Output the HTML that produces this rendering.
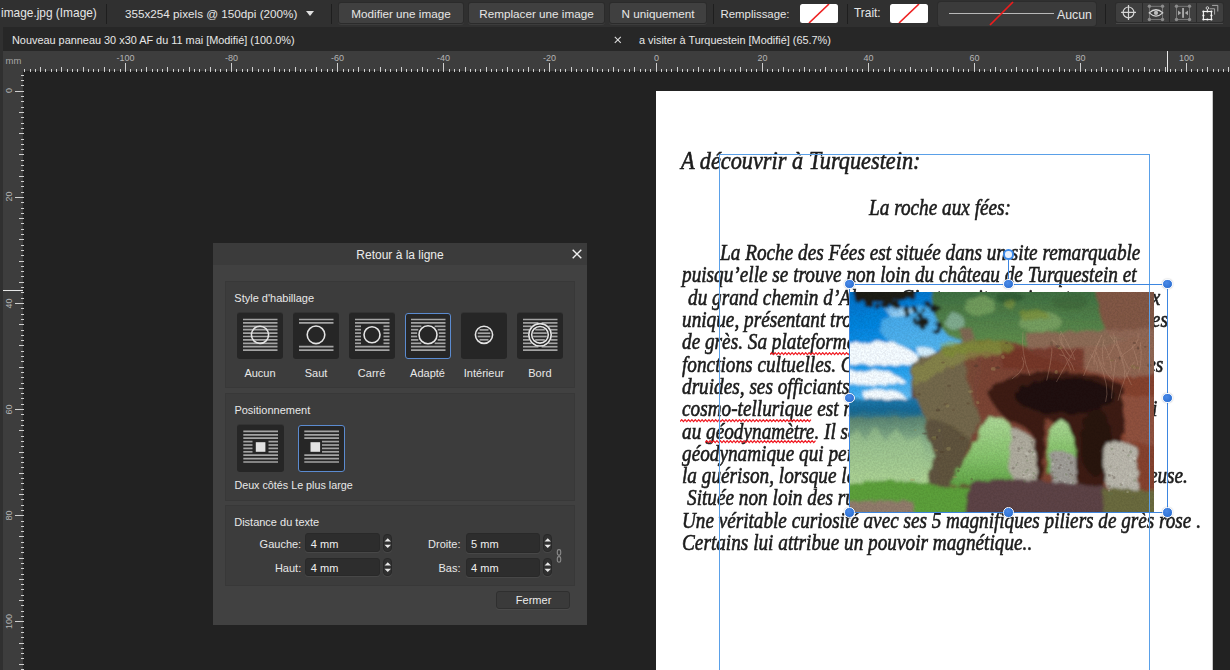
<!DOCTYPE html><html><head><meta charset="utf-8"><title>r</title><style>
*{margin:0;padding:0;box-sizing:border-box}
html,body{width:1230px;height:670px;overflow:hidden;background:#222;font-family:"Liberation Sans",sans-serif}
.a{position:absolute}
.ui{color:#e6e6e6;font-size:11.7px;white-space:nowrap;line-height:1}
.sep{position:absolute;width:1px;background:#1e1e1e;top:4px;height:20px}
.btn{position:absolute;top:3px;height:20px;background:#404040;border-radius:2px;box-shadow:0 0 0 1px #2b2b2b,0 1px 0 1px #3c3c3c}
.tick{position:absolute;background:#cfcfcf;width:1px}
.rl{position:absolute;color:#b4b4b4;font-size:9px;line-height:1;white-space:nowrap}
.doc{position:absolute;font-family:"Liberation Serif",serif;font-style:italic;color:#1c1c1c;-webkit-text-stroke:0.6px #1c1c1c;white-space:pre;line-height:1;transform-origin:0 0}
</style></head><body>
<div class="a" style="left:0;top:0;width:1230px;height:27px;background:#303030"></div>
<div class="a ui" style="left:1px;top:8.23px;font-size:11.9px;color:#e6e6e6;">image.jpg (Image)</div>
<div class="sep" style="left:106px"></div>
<div class="a ui" style="left:125px;top:7.80px;font-size:11.7px;color:#e6e6e6;">355x254 pixels @ 150dpi (200%)</div>
<svg class="a" style="left:306px;top:11px" width="8" height="5"><path d="M0 0H8L4 5Z" fill="#e0e0e0"/></svg>
<div class="sep" style="left:331px"></div>
<div class="btn" style="left:339px;width:124px"></div>
<div class="a ui" style="left:339px;width:124px;top:7.6px;text-align:center">Modifier une image</div>
<div class="btn" style="left:469px;width:135px"></div>
<div class="a ui" style="left:469px;width:135px;top:7.6px;text-align:center">Remplacer une image</div>
<div class="btn" style="left:610px;width:96px"></div>
<div class="a ui" style="left:610px;width:96px;top:7.6px;text-align:center">N uniquement</div>
<div class="sep" style="left:713px"></div>
<div class="a ui" style="left:720.5px;top:8.65px;font-size:11.4px;color:#e6e6e6;">Remplissage:</div>
<svg class="a" style="left:800px;top:4px" width="38" height="19"><rect x="0" y="0" width="38" height="19" rx="2.5" fill="#fff"/><line x1="9" y1="19" x2="29" y2="0" stroke="#ee2020" stroke-width="1.6"/></svg>
<div class="sep" style="left:847px"></div>
<div class="a ui" style="left:854px;top:8.23px;font-size:11.9px;color:#e6e6e6;">Trait:</div>
<svg class="a" style="left:890px;top:4px" width="38" height="19"><rect x="0" y="0" width="38" height="19" rx="2.5" fill="#fff"/><line x1="9" y1="19" x2="29" y2="0" stroke="#ee2020" stroke-width="1.6"/></svg>
<div class="a" style="left:938px;top:2px;width:158px;height:24px;background:#3b3b3b;border-radius:3px;box-shadow:0 0 0 1px #2c2c2c"></div>
<div class="a" style="left:949px;top:13px;width:105px;height:1px;background:#b8b8b8"></div>
<svg class="a" style="left:988px;top:1px" width="28" height="26"><line x1="2" y1="24" x2="25" y2="1" stroke="#ee1c1c" stroke-width="1.7"/></svg>
<div class="a ui" style="left:1057px;top:8.59px;font-size:12.3px;color:#e6e6e6;">Aucun</div>
<div class="sep" style="left:1105px"></div>
<div class="a" style="left:1116px;top:3px;width:107px;height:19px;background:#3f3f3f;border-radius:2px;box-shadow:0 0 0 1px #2c2c2c"></div>
<div class="a" style="left:1116px;top:22.5px;width:107px;height:1.5px;background:#484848"></div>
<div class="a" style="left:1142px;top:3px;width:1px;height:19px;background:#2a2a2a"></div>
<div class="a" style="left:1169px;top:3px;width:1px;height:19px;background:#2a2a2a"></div>
<div class="a" style="left:1196px;top:3px;width:1px;height:19px;background:#2a2a2a"></div>
<svg class="a" style="left:1116px;top:3px" width="107" height="20">
<g stroke="#d6d6d6" fill="none" stroke-width="1.2">
<circle cx="12.5" cy="9.4" r="5.4"/><path d="M12.5 1.9V17M5.1 9.4H20"/>
</g>
<rect x="33.4" y="3.3" width="13.1" height="13.2" fill="none" stroke="#7c7c7c" stroke-width="0.9"/>
<g fill="#8c8c8c"><circle cx="33.4" cy="3.3" r="1.7"/><circle cx="46.5" cy="3.3" r="1.7"/><circle cx="33.4" cy="16.5" r="1.7"/><circle cx="46.5" cy="16.5" r="1.7"/></g>
<path d="M33.2 9.9Q40 3.6 46.8 9.9Q40 16.2 33.2 9.9Z" fill="#3d3d3d" stroke="#d6d6d6" stroke-width="1.2"/>
<circle cx="40" cy="9.9" r="2.1" fill="#bdbdbd"/>
<rect x="60.5" y="3.3" width="13" height="13.2" fill="none" stroke="#7c7c7c" stroke-width="0.9"/>
<g fill="#8c8c8c"><circle cx="60.5" cy="3.3" r="1.7"/><circle cx="73.5" cy="3.3" r="1.7"/><circle cx="60.5" cy="16.5" r="1.7"/><circle cx="73.5" cy="16.5" r="1.7"/></g>
<rect x="66.1" y="5" width="1.9" height="9.8" fill="#a8a8a8"/>
<path d="M62 7.6L65.3 9.9L62 12.2ZM72 7.6L68.8 9.9L72 12.2Z" fill="#a8a8a8"/>
<path d="M93.5 5.8H98.6V11.6M96.1 2.4H101.8V8.5" fill="none" stroke="#b4b4b4" stroke-width="0.9"/>
<rect x="87.4" y="8.5" width="8" height="8" fill="#3d3d3d" stroke="#f2f2f2" stroke-width="1.1"/>
<g fill="#f6f6f6"><circle cx="87.4" cy="8.5" r="1.1"/><circle cx="95.4" cy="8.5" r="1.1"/><circle cx="87.4" cy="16.5" r="1.1"/><circle cx="95.4" cy="16.5" r="1.1"/><circle cx="91.4" cy="8.5" r="1.1"/><circle cx="91.4" cy="16.5" r="1.1"/><circle cx="87.4" cy="12.5" r="1.1"/><circle cx="95.4" cy="12.5" r="1.1"/></g>
<path d="M91.4 6.3V8.5" stroke="#f2f2f2" stroke-width="0.9"/>
<circle cx="91.4" cy="5" r="1.3" fill="none" stroke="#e8e8e8" stroke-width="0.8"/>
</svg>
<div class="a" style="left:0;top:27px;width:1230px;height:24px;background:#272727"></div>
<div class="a" style="left:0;top:27px;width:3px;height:24px;background:#303030"></div>
<div class="a ui" style="left:12px;top:34.77px;font-size:10.9px;color:#e8e8e8;">Nouveau panneau 30 x30 AF du 11 mai [Modifié] (100.0%)</div>
<svg class="a" style="left:614px;top:35.5px" width="8" height="8"><path d="M0.8 0.8L6.8 6.8M6.8 0.8L0.8 6.8" stroke="#dcdcdc" stroke-width="1.1"/></svg>
<div class="a ui" style="left:639px;top:34.77px;font-size:10.9px;color:#e8e8e8;">a visiter à Turquestein [Modifié] (65.7%)</div>
<div class="a" style="left:0;top:51px;width:3px;height:619px;background:#303030"></div>
<div class="a" style="left:3px;top:51px;width:1227px;height:20px;background:#3d3d3d"></div>
<div class="a" style="left:3px;top:71px;width:20px;height:599px;background:#3d3d3d"></div>
<div class="rl" style="left:5.5px;top:56px;font-size:9.5px;color:#a8a8a8">mm</div>
<div class="tick" style="left:24px;top:69px;height:3px"></div>
<div class="tick" style="left:30px;top:69px;height:3px"></div>
<div class="tick" style="left:35px;top:69px;height:3px"></div>
<div class="tick" style="left:40px;top:67px;height:5px"></div>
<div class="tick" style="left:45px;top:69px;height:3px"></div>
<div class="tick" style="left:51px;top:69px;height:3px"></div>
<div class="tick" style="left:56px;top:69px;height:3px"></div>
<div class="tick" style="left:61px;top:67px;height:5px"></div>
<div class="tick" style="left:67px;top:69px;height:3px"></div>
<div class="tick" style="left:72px;top:69px;height:3px"></div>
<div class="tick" style="left:77px;top:69px;height:3px"></div>
<div class="tick" style="left:83px;top:67px;height:5px"></div>
<div class="tick" style="left:88px;top:69px;height:3px"></div>
<div class="tick" style="left:93px;top:69px;height:3px"></div>
<div class="tick" style="left:98px;top:69px;height:3px"></div>
<div class="tick" style="left:104px;top:67px;height:5px"></div>
<div class="tick" style="left:109px;top:69px;height:3px"></div>
<div class="tick" style="left:114px;top:69px;height:3px"></div>
<div class="tick" style="left:120px;top:69px;height:3px"></div>
<div class="tick" style="left:125px;top:63px;height:9px"></div>
<div class="rl" style="left:105.5px;width:40px;text-align:center;top:53.5px">-100</div>
<div class="tick" style="left:130px;top:69px;height:3px"></div>
<div class="tick" style="left:136px;top:69px;height:3px"></div>
<div class="tick" style="left:141px;top:69px;height:3px"></div>
<div class="tick" style="left:146px;top:67px;height:5px"></div>
<div class="tick" style="left:152px;top:69px;height:3px"></div>
<div class="tick" style="left:157px;top:69px;height:3px"></div>
<div class="tick" style="left:162px;top:69px;height:3px"></div>
<div class="tick" style="left:167px;top:67px;height:5px"></div>
<div class="tick" style="left:173px;top:69px;height:3px"></div>
<div class="tick" style="left:178px;top:69px;height:3px"></div>
<div class="tick" style="left:183px;top:69px;height:3px"></div>
<div class="tick" style="left:189px;top:67px;height:5px"></div>
<div class="tick" style="left:194px;top:69px;height:3px"></div>
<div class="tick" style="left:199px;top:69px;height:3px"></div>
<div class="tick" style="left:205px;top:69px;height:3px"></div>
<div class="tick" style="left:210px;top:67px;height:5px"></div>
<div class="tick" style="left:215px;top:69px;height:3px"></div>
<div class="tick" style="left:220px;top:69px;height:3px"></div>
<div class="tick" style="left:226px;top:69px;height:3px"></div>
<div class="tick" style="left:231px;top:63px;height:9px"></div>
<div class="rl" style="left:211.5px;width:40px;text-align:center;top:53.5px">-80</div>
<div class="tick" style="left:236px;top:69px;height:3px"></div>
<div class="tick" style="left:242px;top:69px;height:3px"></div>
<div class="tick" style="left:247px;top:69px;height:3px"></div>
<div class="tick" style="left:252px;top:67px;height:5px"></div>
<div class="tick" style="left:258px;top:69px;height:3px"></div>
<div class="tick" style="left:263px;top:69px;height:3px"></div>
<div class="tick" style="left:268px;top:69px;height:3px"></div>
<div class="tick" style="left:274px;top:67px;height:5px"></div>
<div class="tick" style="left:279px;top:69px;height:3px"></div>
<div class="tick" style="left:284px;top:69px;height:3px"></div>
<div class="tick" style="left:289px;top:69px;height:3px"></div>
<div class="tick" style="left:295px;top:67px;height:5px"></div>
<div class="tick" style="left:300px;top:69px;height:3px"></div>
<div class="tick" style="left:305px;top:69px;height:3px"></div>
<div class="tick" style="left:311px;top:69px;height:3px"></div>
<div class="tick" style="left:316px;top:67px;height:5px"></div>
<div class="tick" style="left:321px;top:69px;height:3px"></div>
<div class="tick" style="left:327px;top:69px;height:3px"></div>
<div class="tick" style="left:332px;top:69px;height:3px"></div>
<div class="tick" style="left:337px;top:63px;height:9px"></div>
<div class="rl" style="left:317.5px;width:40px;text-align:center;top:53.5px">-60</div>
<div class="tick" style="left:343px;top:69px;height:3px"></div>
<div class="tick" style="left:348px;top:69px;height:3px"></div>
<div class="tick" style="left:353px;top:69px;height:3px"></div>
<div class="tick" style="left:358px;top:67px;height:5px"></div>
<div class="tick" style="left:364px;top:69px;height:3px"></div>
<div class="tick" style="left:369px;top:69px;height:3px"></div>
<div class="tick" style="left:374px;top:69px;height:3px"></div>
<div class="tick" style="left:380px;top:67px;height:5px"></div>
<div class="tick" style="left:385px;top:69px;height:3px"></div>
<div class="tick" style="left:390px;top:69px;height:3px"></div>
<div class="tick" style="left:396px;top:69px;height:3px"></div>
<div class="tick" style="left:401px;top:67px;height:5px"></div>
<div class="tick" style="left:406px;top:69px;height:3px"></div>
<div class="tick" style="left:411px;top:69px;height:3px"></div>
<div class="tick" style="left:417px;top:69px;height:3px"></div>
<div class="tick" style="left:422px;top:67px;height:5px"></div>
<div class="tick" style="left:427px;top:69px;height:3px"></div>
<div class="tick" style="left:433px;top:69px;height:3px"></div>
<div class="tick" style="left:438px;top:69px;height:3px"></div>
<div class="tick" style="left:443px;top:63px;height:9px"></div>
<div class="rl" style="left:423.5px;width:40px;text-align:center;top:53.5px">-40</div>
<div class="tick" style="left:449px;top:69px;height:3px"></div>
<div class="tick" style="left:454px;top:69px;height:3px"></div>
<div class="tick" style="left:459px;top:69px;height:3px"></div>
<div class="tick" style="left:465px;top:67px;height:5px"></div>
<div class="tick" style="left:470px;top:69px;height:3px"></div>
<div class="tick" style="left:475px;top:69px;height:3px"></div>
<div class="tick" style="left:480px;top:69px;height:3px"></div>
<div class="tick" style="left:486px;top:67px;height:5px"></div>
<div class="tick" style="left:491px;top:69px;height:3px"></div>
<div class="tick" style="left:496px;top:69px;height:3px"></div>
<div class="tick" style="left:502px;top:69px;height:3px"></div>
<div class="tick" style="left:507px;top:67px;height:5px"></div>
<div class="tick" style="left:512px;top:69px;height:3px"></div>
<div class="tick" style="left:518px;top:69px;height:3px"></div>
<div class="tick" style="left:523px;top:69px;height:3px"></div>
<div class="tick" style="left:528px;top:67px;height:5px"></div>
<div class="tick" style="left:533px;top:69px;height:3px"></div>
<div class="tick" style="left:539px;top:69px;height:3px"></div>
<div class="tick" style="left:544px;top:69px;height:3px"></div>
<div class="tick" style="left:549px;top:63px;height:9px"></div>
<div class="rl" style="left:529.5px;width:40px;text-align:center;top:53.5px">-20</div>
<div class="tick" style="left:555px;top:69px;height:3px"></div>
<div class="tick" style="left:560px;top:69px;height:3px"></div>
<div class="tick" style="left:565px;top:69px;height:3px"></div>
<div class="tick" style="left:571px;top:67px;height:5px"></div>
<div class="tick" style="left:576px;top:69px;height:3px"></div>
<div class="tick" style="left:581px;top:69px;height:3px"></div>
<div class="tick" style="left:587px;top:69px;height:3px"></div>
<div class="tick" style="left:592px;top:67px;height:5px"></div>
<div class="tick" style="left:597px;top:69px;height:3px"></div>
<div class="tick" style="left:602px;top:69px;height:3px"></div>
<div class="tick" style="left:608px;top:69px;height:3px"></div>
<div class="tick" style="left:613px;top:67px;height:5px"></div>
<div class="tick" style="left:618px;top:69px;height:3px"></div>
<div class="tick" style="left:624px;top:69px;height:3px"></div>
<div class="tick" style="left:629px;top:69px;height:3px"></div>
<div class="tick" style="left:634px;top:67px;height:5px"></div>
<div class="tick" style="left:640px;top:69px;height:3px"></div>
<div class="tick" style="left:645px;top:69px;height:3px"></div>
<div class="tick" style="left:650px;top:69px;height:3px"></div>
<div class="tick" style="left:656px;top:63px;height:9px"></div>
<div class="rl" style="left:636.5px;width:40px;text-align:center;top:53.5px">0</div>
<div class="tick" style="left:661px;top:69px;height:3px"></div>
<div class="tick" style="left:666px;top:69px;height:3px"></div>
<div class="tick" style="left:671px;top:69px;height:3px"></div>
<div class="tick" style="left:677px;top:67px;height:5px"></div>
<div class="tick" style="left:682px;top:69px;height:3px"></div>
<div class="tick" style="left:687px;top:69px;height:3px"></div>
<div class="tick" style="left:693px;top:69px;height:3px"></div>
<div class="tick" style="left:698px;top:67px;height:5px"></div>
<div class="tick" style="left:703px;top:69px;height:3px"></div>
<div class="tick" style="left:709px;top:69px;height:3px"></div>
<div class="tick" style="left:714px;top:69px;height:3px"></div>
<div class="tick" style="left:719px;top:67px;height:5px"></div>
<div class="tick" style="left:724px;top:69px;height:3px"></div>
<div class="tick" style="left:730px;top:69px;height:3px"></div>
<div class="tick" style="left:735px;top:69px;height:3px"></div>
<div class="tick" style="left:740px;top:67px;height:5px"></div>
<div class="tick" style="left:746px;top:69px;height:3px"></div>
<div class="tick" style="left:751px;top:69px;height:3px"></div>
<div class="tick" style="left:756px;top:69px;height:3px"></div>
<div class="tick" style="left:762px;top:63px;height:9px"></div>
<div class="rl" style="left:742.5px;width:40px;text-align:center;top:53.5px">20</div>
<div class="tick" style="left:767px;top:69px;height:3px"></div>
<div class="tick" style="left:772px;top:69px;height:3px"></div>
<div class="tick" style="left:778px;top:69px;height:3px"></div>
<div class="tick" style="left:783px;top:67px;height:5px"></div>
<div class="tick" style="left:788px;top:69px;height:3px"></div>
<div class="tick" style="left:793px;top:69px;height:3px"></div>
<div class="tick" style="left:799px;top:69px;height:3px"></div>
<div class="tick" style="left:804px;top:67px;height:5px"></div>
<div class="tick" style="left:809px;top:69px;height:3px"></div>
<div class="tick" style="left:815px;top:69px;height:3px"></div>
<div class="tick" style="left:820px;top:69px;height:3px"></div>
<div class="tick" style="left:825px;top:67px;height:5px"></div>
<div class="tick" style="left:831px;top:69px;height:3px"></div>
<div class="tick" style="left:836px;top:69px;height:3px"></div>
<div class="tick" style="left:841px;top:69px;height:3px"></div>
<div class="tick" style="left:846px;top:67px;height:5px"></div>
<div class="tick" style="left:852px;top:69px;height:3px"></div>
<div class="tick" style="left:857px;top:69px;height:3px"></div>
<div class="tick" style="left:862px;top:69px;height:3px"></div>
<div class="tick" style="left:868px;top:63px;height:9px"></div>
<div class="rl" style="left:848.5px;width:40px;text-align:center;top:53.5px">40</div>
<div class="tick" style="left:873px;top:69px;height:3px"></div>
<div class="tick" style="left:878px;top:69px;height:3px"></div>
<div class="tick" style="left:884px;top:69px;height:3px"></div>
<div class="tick" style="left:889px;top:67px;height:5px"></div>
<div class="tick" style="left:894px;top:69px;height:3px"></div>
<div class="tick" style="left:900px;top:69px;height:3px"></div>
<div class="tick" style="left:905px;top:69px;height:3px"></div>
<div class="tick" style="left:910px;top:67px;height:5px"></div>
<div class="tick" style="left:915px;top:69px;height:3px"></div>
<div class="tick" style="left:921px;top:69px;height:3px"></div>
<div class="tick" style="left:926px;top:69px;height:3px"></div>
<div class="tick" style="left:931px;top:67px;height:5px"></div>
<div class="tick" style="left:937px;top:69px;height:3px"></div>
<div class="tick" style="left:942px;top:69px;height:3px"></div>
<div class="tick" style="left:947px;top:69px;height:3px"></div>
<div class="tick" style="left:953px;top:67px;height:5px"></div>
<div class="tick" style="left:958px;top:69px;height:3px"></div>
<div class="tick" style="left:963px;top:69px;height:3px"></div>
<div class="tick" style="left:968px;top:69px;height:3px"></div>
<div class="tick" style="left:974px;top:63px;height:9px"></div>
<div class="rl" style="left:954.5px;width:40px;text-align:center;top:53.5px">60</div>
<div class="tick" style="left:979px;top:69px;height:3px"></div>
<div class="tick" style="left:984px;top:69px;height:3px"></div>
<div class="tick" style="left:990px;top:69px;height:3px"></div>
<div class="tick" style="left:995px;top:67px;height:5px"></div>
<div class="tick" style="left:1000px;top:69px;height:3px"></div>
<div class="tick" style="left:1006px;top:69px;height:3px"></div>
<div class="tick" style="left:1011px;top:69px;height:3px"></div>
<div class="tick" style="left:1016px;top:67px;height:5px"></div>
<div class="tick" style="left:1022px;top:69px;height:3px"></div>
<div class="tick" style="left:1027px;top:69px;height:3px"></div>
<div class="tick" style="left:1032px;top:69px;height:3px"></div>
<div class="tick" style="left:1037px;top:67px;height:5px"></div>
<div class="tick" style="left:1043px;top:69px;height:3px"></div>
<div class="tick" style="left:1048px;top:69px;height:3px"></div>
<div class="tick" style="left:1053px;top:69px;height:3px"></div>
<div class="tick" style="left:1059px;top:67px;height:5px"></div>
<div class="tick" style="left:1064px;top:69px;height:3px"></div>
<div class="tick" style="left:1069px;top:69px;height:3px"></div>
<div class="tick" style="left:1075px;top:69px;height:3px"></div>
<div class="tick" style="left:1080px;top:63px;height:9px"></div>
<div class="rl" style="left:1060.5px;width:40px;text-align:center;top:53.5px">80</div>
<div class="tick" style="left:1085px;top:69px;height:3px"></div>
<div class="tick" style="left:1091px;top:69px;height:3px"></div>
<div class="tick" style="left:1096px;top:69px;height:3px"></div>
<div class="tick" style="left:1101px;top:67px;height:5px"></div>
<div class="tick" style="left:1106px;top:69px;height:3px"></div>
<div class="tick" style="left:1112px;top:69px;height:3px"></div>
<div class="tick" style="left:1117px;top:69px;height:3px"></div>
<div class="tick" style="left:1122px;top:67px;height:5px"></div>
<div class="tick" style="left:1128px;top:69px;height:3px"></div>
<div class="tick" style="left:1133px;top:69px;height:3px"></div>
<div class="tick" style="left:1138px;top:69px;height:3px"></div>
<div class="tick" style="left:1144px;top:67px;height:5px"></div>
<div class="tick" style="left:1149px;top:69px;height:3px"></div>
<div class="tick" style="left:1154px;top:69px;height:3px"></div>
<div class="tick" style="left:1159px;top:69px;height:3px"></div>
<div class="tick" style="left:1165px;top:67px;height:5px"></div>
<div class="tick" style="left:1170px;top:69px;height:3px"></div>
<div class="tick" style="left:1175px;top:69px;height:3px"></div>
<div class="tick" style="left:1181px;top:69px;height:3px"></div>
<div class="tick" style="left:1186px;top:63px;height:9px"></div>
<div class="rl" style="left:1166.5px;width:40px;text-align:center;top:53.5px">100</div>
<div class="tick" style="left:1191px;top:69px;height:3px"></div>
<div class="tick" style="left:1197px;top:69px;height:3px"></div>
<div class="tick" style="left:1202px;top:69px;height:3px"></div>
<div class="tick" style="left:1207px;top:67px;height:5px"></div>
<div class="tick" style="left:1213px;top:69px;height:3px"></div>
<div class="tick" style="left:1218px;top:69px;height:3px"></div>
<div class="tick" style="left:1223px;top:69px;height:3px"></div>
<div class="tick" style="left:1228px;top:67px;height:5px"></div>
<div class="a" style="left:1167px;top:51px;width:1px;height:21px;background:#e8e8e8"></div>
<div class="tick" style="top:75px;left:21px;width:3px;height:1px"></div>
<div class="tick" style="top:80px;left:21px;width:3px;height:1px"></div>
<div class="tick" style="top:85px;left:21px;width:3px;height:1px"></div>
<div class="tick" style="top:91px;left:15px;width:9px;height:1px"></div>
<div class="rl" style="left:-11.3px;top:86.3px;width:40px;text-align:center;transform:rotate(-90deg)">0</div>
<div class="tick" style="top:96px;left:21px;width:3px;height:1px"></div>
<div class="tick" style="top:101px;left:21px;width:3px;height:1px"></div>
<div class="tick" style="top:107px;left:21px;width:3px;height:1px"></div>
<div class="tick" style="top:112px;left:19px;width:5px;height:1px"></div>
<div class="tick" style="top:117px;left:21px;width:3px;height:1px"></div>
<div class="tick" style="top:123px;left:21px;width:3px;height:1px"></div>
<div class="tick" style="top:128px;left:21px;width:3px;height:1px"></div>
<div class="tick" style="top:133px;left:19px;width:5px;height:1px"></div>
<div class="tick" style="top:139px;left:21px;width:3px;height:1px"></div>
<div class="tick" style="top:144px;left:21px;width:3px;height:1px"></div>
<div class="tick" style="top:149px;left:21px;width:3px;height:1px"></div>
<div class="tick" style="top:154px;left:19px;width:5px;height:1px"></div>
<div class="tick" style="top:160px;left:21px;width:3px;height:1px"></div>
<div class="tick" style="top:165px;left:21px;width:3px;height:1px"></div>
<div class="tick" style="top:170px;left:21px;width:3px;height:1px"></div>
<div class="tick" style="top:176px;left:19px;width:5px;height:1px"></div>
<div class="tick" style="top:181px;left:21px;width:3px;height:1px"></div>
<div class="tick" style="top:186px;left:21px;width:3px;height:1px"></div>
<div class="tick" style="top:192px;left:21px;width:3px;height:1px"></div>
<div class="tick" style="top:197px;left:15px;width:9px;height:1px"></div>
<div class="rl" style="left:-11.3px;top:192.4px;width:40px;text-align:center;transform:rotate(-90deg)">20</div>
<div class="tick" style="top:202px;left:21px;width:3px;height:1px"></div>
<div class="tick" style="top:208px;left:21px;width:3px;height:1px"></div>
<div class="tick" style="top:213px;left:21px;width:3px;height:1px"></div>
<div class="tick" style="top:218px;left:19px;width:5px;height:1px"></div>
<div class="tick" style="top:223px;left:21px;width:3px;height:1px"></div>
<div class="tick" style="top:229px;left:21px;width:3px;height:1px"></div>
<div class="tick" style="top:234px;left:21px;width:3px;height:1px"></div>
<div class="tick" style="top:239px;left:19px;width:5px;height:1px"></div>
<div class="tick" style="top:245px;left:21px;width:3px;height:1px"></div>
<div class="tick" style="top:250px;left:21px;width:3px;height:1px"></div>
<div class="tick" style="top:255px;left:21px;width:3px;height:1px"></div>
<div class="tick" style="top:261px;left:19px;width:5px;height:1px"></div>
<div class="tick" style="top:266px;left:21px;width:3px;height:1px"></div>
<div class="tick" style="top:271px;left:21px;width:3px;height:1px"></div>
<div class="tick" style="top:276px;left:21px;width:3px;height:1px"></div>
<div class="tick" style="top:282px;left:19px;width:5px;height:1px"></div>
<div class="tick" style="top:287px;left:21px;width:3px;height:1px"></div>
<div class="tick" style="top:292px;left:21px;width:3px;height:1px"></div>
<div class="tick" style="top:298px;left:21px;width:3px;height:1px"></div>
<div class="tick" style="top:303px;left:15px;width:9px;height:1px"></div>
<div class="rl" style="left:-11.3px;top:298.5px;width:40px;text-align:center;transform:rotate(-90deg)">40</div>
<div class="tick" style="top:308px;left:21px;width:3px;height:1px"></div>
<div class="tick" style="top:314px;left:21px;width:3px;height:1px"></div>
<div class="tick" style="top:319px;left:21px;width:3px;height:1px"></div>
<div class="tick" style="top:324px;left:19px;width:5px;height:1px"></div>
<div class="tick" style="top:330px;left:21px;width:3px;height:1px"></div>
<div class="tick" style="top:335px;left:21px;width:3px;height:1px"></div>
<div class="tick" style="top:340px;left:21px;width:3px;height:1px"></div>
<div class="tick" style="top:345px;left:19px;width:5px;height:1px"></div>
<div class="tick" style="top:351px;left:21px;width:3px;height:1px"></div>
<div class="tick" style="top:356px;left:21px;width:3px;height:1px"></div>
<div class="tick" style="top:361px;left:21px;width:3px;height:1px"></div>
<div class="tick" style="top:367px;left:19px;width:5px;height:1px"></div>
<div class="tick" style="top:372px;left:21px;width:3px;height:1px"></div>
<div class="tick" style="top:377px;left:21px;width:3px;height:1px"></div>
<div class="tick" style="top:383px;left:21px;width:3px;height:1px"></div>
<div class="tick" style="top:388px;left:19px;width:5px;height:1px"></div>
<div class="tick" style="top:393px;left:21px;width:3px;height:1px"></div>
<div class="tick" style="top:398px;left:21px;width:3px;height:1px"></div>
<div class="tick" style="top:404px;left:21px;width:3px;height:1px"></div>
<div class="tick" style="top:409px;left:15px;width:9px;height:1px"></div>
<div class="rl" style="left:-11.3px;top:404.6px;width:40px;text-align:center;transform:rotate(-90deg)">60</div>
<div class="tick" style="top:414px;left:21px;width:3px;height:1px"></div>
<div class="tick" style="top:420px;left:21px;width:3px;height:1px"></div>
<div class="tick" style="top:425px;left:21px;width:3px;height:1px"></div>
<div class="tick" style="top:430px;left:19px;width:5px;height:1px"></div>
<div class="tick" style="top:436px;left:21px;width:3px;height:1px"></div>
<div class="tick" style="top:441px;left:21px;width:3px;height:1px"></div>
<div class="tick" style="top:446px;left:21px;width:3px;height:1px"></div>
<div class="tick" style="top:452px;left:19px;width:5px;height:1px"></div>
<div class="tick" style="top:457px;left:21px;width:3px;height:1px"></div>
<div class="tick" style="top:462px;left:21px;width:3px;height:1px"></div>
<div class="tick" style="top:467px;left:21px;width:3px;height:1px"></div>
<div class="tick" style="top:473px;left:19px;width:5px;height:1px"></div>
<div class="tick" style="top:478px;left:21px;width:3px;height:1px"></div>
<div class="tick" style="top:483px;left:21px;width:3px;height:1px"></div>
<div class="tick" style="top:489px;left:21px;width:3px;height:1px"></div>
<div class="tick" style="top:494px;left:19px;width:5px;height:1px"></div>
<div class="tick" style="top:499px;left:21px;width:3px;height:1px"></div>
<div class="tick" style="top:505px;left:21px;width:3px;height:1px"></div>
<div class="tick" style="top:510px;left:21px;width:3px;height:1px"></div>
<div class="tick" style="top:515px;left:15px;width:9px;height:1px"></div>
<div class="rl" style="left:-11.3px;top:510.7px;width:40px;text-align:center;transform:rotate(-90deg)">80</div>
<div class="tick" style="top:521px;left:21px;width:3px;height:1px"></div>
<div class="tick" style="top:526px;left:21px;width:3px;height:1px"></div>
<div class="tick" style="top:531px;left:21px;width:3px;height:1px"></div>
<div class="tick" style="top:536px;left:19px;width:5px;height:1px"></div>
<div class="tick" style="top:542px;left:21px;width:3px;height:1px"></div>
<div class="tick" style="top:547px;left:21px;width:3px;height:1px"></div>
<div class="tick" style="top:552px;left:21px;width:3px;height:1px"></div>
<div class="tick" style="top:558px;left:19px;width:5px;height:1px"></div>
<div class="tick" style="top:563px;left:21px;width:3px;height:1px"></div>
<div class="tick" style="top:568px;left:21px;width:3px;height:1px"></div>
<div class="tick" style="top:574px;left:21px;width:3px;height:1px"></div>
<div class="tick" style="top:579px;left:19px;width:5px;height:1px"></div>
<div class="tick" style="top:584px;left:21px;width:3px;height:1px"></div>
<div class="tick" style="top:589px;left:21px;width:3px;height:1px"></div>
<div class="tick" style="top:595px;left:21px;width:3px;height:1px"></div>
<div class="tick" style="top:600px;left:19px;width:5px;height:1px"></div>
<div class="tick" style="top:605px;left:21px;width:3px;height:1px"></div>
<div class="tick" style="top:611px;left:21px;width:3px;height:1px"></div>
<div class="tick" style="top:616px;left:21px;width:3px;height:1px"></div>
<div class="tick" style="top:621px;left:15px;width:9px;height:1px"></div>
<div class="rl" style="left:-11.3px;top:616.8px;width:40px;text-align:center;transform:rotate(-90deg)">100</div>
<div class="tick" style="top:627px;left:21px;width:3px;height:1px"></div>
<div class="tick" style="top:632px;left:21px;width:3px;height:1px"></div>
<div class="tick" style="top:637px;left:21px;width:3px;height:1px"></div>
<div class="tick" style="top:643px;left:19px;width:5px;height:1px"></div>
<div class="tick" style="top:648px;left:21px;width:3px;height:1px"></div>
<div class="tick" style="top:653px;left:21px;width:3px;height:1px"></div>
<div class="tick" style="top:658px;left:21px;width:3px;height:1px"></div>
<div class="tick" style="top:664px;left:19px;width:5px;height:1px"></div>
<div class="tick" style="top:669px;left:21px;width:3px;height:1px"></div>
<div class="a" style="left:3px;top:290px;width:20px;height:1px;background:#e8e8e8"></div>
<div class="a" style="left:656px;top:91px;width:557px;height:579px;background:#fff;box-shadow:inset -1px 0 0 #c8c8c8"></div>
<div class="doc" style="left:680.5px;top:147.53px;font-size:26px;transform:scaleX(0.857)">A découvrir à Turquestein:</div>
<div class="doc" style="left:869px;top:196.24px;font-size:23px;transform:scaleX(0.837)">La roche aux fées:</div>
<div class="doc" style="left:719.6px;top:241.14px;font-size:23px;transform:scaleX(0.837)">La Roche des Fées est située dans un site remarquable</div>
<div class="doc" style="left:681.6px;top:263.44px;font-size:23px;transform:scaleX(0.837)">puisqu’elle se trouve non loin du château de Turquestein et</div>
<div class="doc" style="left:688px;top:285.74px;font-size:23px;transform:scaleX(0.837)">du grand chemin d’Alsace. C’est un site vraiment </div>
<div class="a" style="left:1154px;top:281.74px;width:59px;height:31px;overflow:hidden"><div class="doc" style="left:auto;right:53.0px;top:4px;font-size:23px;transform:scaleX(0.837);transform-origin:100% 0">deux</div></div>
<div class="doc" style="left:681.6px;top:308.04px;font-size:23px;transform:scaleX(0.837)">unique, présentant trois piliers et une voûte </div>
<div class="a" style="left:1154px;top:304.04px;width:59px;height:31px;overflow:hidden"><div class="doc" style="left:auto;right:45.0px;top:4px;font-size:23px;transform:scaleX(0.837);transform-origin:100% 0">des roches</div></div>
<div class="doc" style="left:681.6px;top:330.34px;font-size:23px;transform:scaleX(0.837)">de grès. Sa plateforme supérieure </div>
<div class="doc" style="left:681.6px;top:352.64px;font-size:23px;transform:scaleX(0.837)">fonctions cultuelles. C’est un lieu </div>
<div class="a" style="left:1154px;top:348.64px;width:59px;height:31px;overflow:hidden"><div class="doc" style="left:auto;right:49.5px;top:4px;font-size:23px;transform:scaleX(0.837);transform-origin:100% 0">res</div></div>
<div class="doc" style="left:681.6px;top:374.94px;font-size:23px;transform:scaleX(0.837)">druides, ses officiants. Son </div>
<div class="doc" style="left:681.6px;top:397.24px;font-size:23px;transform:scaleX(0.837)">cosmo-tellurique est mesurable </div>
<div class="a" style="left:1154px;top:393.24px;width:59px;height:31px;overflow:hidden"><div class="doc" style="left:auto;right:55.5px;top:4px;font-size:23px;transform:scaleX(0.837);transform-origin:100% 0">ri</div></div>
<div class="doc" style="left:681.6px;top:419.54px;font-size:23px;transform:scaleX(0.837)">au géodynamètre. Il serait </div>
<div class="doc" style="left:681.6px;top:441.84px;font-size:23px;transform:scaleX(0.837)">géodynamique qui permettrait </div>
<div class="doc" style="left:681.6px;top:464.14px;font-size:23px;transform:scaleX(0.837)">la guérison, lorsque le passage </div>
<div class="a" style="left:1154px;top:460.14px;width:59px;height:31px;overflow:hidden"><div class="doc" style="left:auto;right:25.0px;top:4px;font-size:23px;transform:scaleX(0.837);transform-origin:100% 0">heureuse.</div></div>
<div class="doc" style="left:687px;top:486.44px;font-size:23px;transform:scaleX(0.837)">Située non loin des ruines </div>
<div class="doc" style="left:681.6px;top:508.74px;font-size:23px;transform:scaleX(0.8335)">Une véritable curiosité avec ses 5 magnifiques piliers de grès rose .</div>
<div class="doc" style="left:681.6px;top:531.04px;font-size:23px;transform:scaleX(0.837)">Certains lui attribue un pouvoir magnétique..</div>
<svg class="a" style="left:769.6px;top:351.6px" width="88" height="4"><polyline points="0.0,2.6 1.7,0.7 3.4,2.6 5.1,0.7 6.8,2.6 8.5,0.7 10.2,2.6 11.9,0.7 13.6,2.6 15.3,0.7 17.0,2.6 18.7,0.7 20.4,2.6 22.1,0.7 23.8,2.6 25.5,0.7 27.2,2.6 28.9,0.7 30.6,2.6 32.3,0.7 34.0,2.6 35.7,0.7 37.4,2.6 39.1,0.7 40.8,2.6 42.5,0.7 44.2,2.6 45.9,0.7 47.6,2.6 49.3,0.7 51.0,2.6 52.7,0.7 54.4,2.6 56.1,0.7 57.8,2.6 59.5,0.7 61.2,2.6 62.9,0.7 64.6,2.6 66.3,0.7 68.0,2.6 69.7,0.7 71.4,2.6 73.1,0.7 74.8,2.6 76.5,0.7 78.2,2.6 79.9,0.7 81.6,2.6 83.3,0.7 85.0,2.6" fill="none" stroke="#f01820" stroke-width="1.25"/></svg>
<svg class="a" style="left:680.4px;top:418.7px" width="133" height="4"><polyline points="0.0,2.6 1.7,0.7 3.4,2.6 5.1,0.7 6.8,2.6 8.5,0.7 10.2,2.6 11.9,0.7 13.6,2.6 15.3,0.7 17.0,2.6 18.7,0.7 20.4,2.6 22.1,0.7 23.8,2.6 25.5,0.7 27.2,2.6 28.9,0.7 30.6,2.6 32.3,0.7 34.0,2.6 35.7,0.7 37.4,2.6 39.1,0.7 40.8,2.6 42.5,0.7 44.2,2.6 45.9,0.7 47.6,2.6 49.3,0.7 51.0,2.6 52.7,0.7 54.4,2.6 56.1,0.7 57.8,2.6 59.5,0.7 61.2,2.6 62.9,0.7 64.6,2.6 66.3,0.7 68.0,2.6 69.7,0.7 71.4,2.6 73.1,0.7 74.8,2.6 76.5,0.7 78.2,2.6 79.9,0.7 81.6,2.6 83.3,0.7 85.0,2.6 86.7,0.7 88.4,2.6 90.1,0.7 91.8,2.6 93.5,0.7 95.2,2.6 96.9,0.7 98.6,2.6 100.3,0.7 102.0,2.6 103.7,0.7 105.4,2.6 107.1,0.7 108.8,2.6 110.5,0.7 112.2,2.6 113.9,0.7 115.6,2.6 117.3,0.7 119.0,2.6 120.7,0.7 122.4,2.6 124.1,0.7 125.8,2.6 127.5,0.7 129.2,2.6 130.9,0.7" fill="none" stroke="#f01820" stroke-width="1.25"/></svg>
<svg class="a" style="left:705.4px;top:440.0px" width="113" height="4"><polyline points="0.0,2.6 1.7,0.7 3.4,2.6 5.1,0.7 6.8,2.6 8.5,0.7 10.2,2.6 11.9,0.7 13.6,2.6 15.3,0.7 17.0,2.6 18.7,0.7 20.4,2.6 22.1,0.7 23.8,2.6 25.5,0.7 27.2,2.6 28.9,0.7 30.6,2.6 32.3,0.7 34.0,2.6 35.7,0.7 37.4,2.6 39.1,0.7 40.8,2.6 42.5,0.7 44.2,2.6 45.9,0.7 47.6,2.6 49.3,0.7 51.0,2.6 52.7,0.7 54.4,2.6 56.1,0.7 57.8,2.6 59.5,0.7 61.2,2.6 62.9,0.7 64.6,2.6 66.3,0.7 68.0,2.6 69.7,0.7 71.4,2.6 73.1,0.7 74.8,2.6 76.5,0.7 78.2,2.6 79.9,0.7 81.6,2.6 83.3,0.7 85.0,2.6 86.7,0.7 88.4,2.6 90.1,0.7 91.8,2.6 93.5,0.7 95.2,2.6 96.9,0.7 98.6,2.6 100.3,0.7 102.0,2.6 103.7,0.7 105.4,2.6 107.1,0.7 108.8,2.6 110.5,0.7" fill="none" stroke="#f01820" stroke-width="1.25"/></svg>
<svg class="a" style="left:850px;top:292px" width="304" height="220" viewBox="0 0 304 220">
<defs>
<linearGradient id="sky" x1="0" y1="0" x2="0.2" y2="1"><stop offset="0" stop-color="#1468a8"/><stop offset="0.4" stop-color="#1f80c4"/><stop offset="0.8" stop-color="#3c9ad4"/><stop offset="1" stop-color="#6ab2de"/></linearGradient>
<linearGradient id="hill" x1="0" y1="0" x2="0" y2="1"><stop offset="0" stop-color="#3278a0"/><stop offset="0.5" stop-color="#286688"/><stop offset="1" stop-color="#4a7a80"/></linearGradient>
<linearGradient id="forest" x1="0" y1="0" x2="0" y2="1"><stop offset="0" stop-color="#5e7e72"/><stop offset="0.25" stop-color="#92b090"/><stop offset="0.6" stop-color="#b0cc9c"/><stop offset="1" stop-color="#94ba80"/></linearGradient>
<linearGradient id="rock" x1="0" y1="0" x2="1" y2="0.1"><stop offset="0" stop-color="#72684e"/><stop offset="0.3" stop-color="#724a3e"/><stop offset="1" stop-color="#7a4638"/></linearGradient>
<linearGradient id="arch" x1="0" y1="0" x2="0" y2="1"><stop offset="0" stop-color="#b0d0a0"/><stop offset="0.6" stop-color="#8cba78"/><stop offset="1" stop-color="#6a9c56"/></linearGradient>
<linearGradient id="canopy" x1="0" y1="0" x2="0" y2="1"><stop offset="0" stop-color="#44684a"/><stop offset="1" stop-color="#688a58"/></linearGradient>
<filter id="soft" x="-2%" y="-2%" width="104%" height="104%"><feTurbulence type="fractalNoise" baseFrequency="0.12" numOctaves="2" seed="7" result="n"/><feDisplacementMap in="SourceGraphic" in2="n" scale="6" result="d"/><feGaussianBlur in="d" stdDeviation="1.4"/></filter>
<filter id="bl2" x="-20%" y="-20%" width="140%" height="140%"><feGaussianBlur stdDeviation="3"/></filter><filter id="bl05" x="-5%" y="-5%" width="110%" height="110%"><feGaussianBlur stdDeviation="0.5"/></filter>
<filter id="tex" x="0" y="0" width="100%" height="100%"><feTurbulence type="fractalNoise" baseFrequency="0.55" numOctaves="3" seed="3"/><feColorMatrix type="matrix" values="0 0 0 0 0.5  0 0 0 0 0.5  0 0 0 0 0.5  0 0 0 -2.4 1.7"/></filter>
<clipPath id="pc"><rect width="304" height="220"/></clipPath>
<filter id="sat" x="0" y="0" width="100%" height="100%" color-interpolation-filters="sRGB"><feColorMatrix type="saturate" values="1.25"/><feComponentTransfer><feFuncR type="linear" slope="1.08" intercept="-0.03"/><feFuncG type="linear" slope="1.08" intercept="-0.03"/><feFuncB type="linear" slope="1.08" intercept="-0.03"/></feComponentTransfer></filter>
</defs>
<g clip-path="url(#pc)"><g filter="url(#sat)">
<g filter="url(#soft)">
<rect x="-10" y="-10" width="324" height="240" fill="#5e4038"/>
<path d="M-10 -10H125V50L92 57L70 66L61 74L62 110H-10Z" fill="url(#sky)"/><ellipse cx="78" cy="36" rx="48" ry="22" fill="#8ac2e2" opacity="0.55"/>
<g fill="#eef4f8">
<path d="M-10 53Q6 49 14 52Q22 48 32 50Q42 48 50 54Q60 56 68 64Q70 70 60 72Q40 74 -10 72Z"/>
<path d="M66 56Q74 53 84 58L88 64Q76 66 68 64Z" opacity="0.85"/>
<path d="M-10 80Q6 77 14 80Q24 77 34 79Q46 81 56 90Q44 93 24 93Q8 93 -10 92Z"/>
<path d="M14 100Q22 96 32 98Q44 97 52 102L56 107L14 107Z"/>
<path d="M34 16Q50 12 66 18Q56 26 40 24Z" opacity="0.5"/>
</g>
<path d="M-10 107H73L76 128H-10Z" fill="url(#hill)"/>
<path d="M-10 125H76L82 155L85 163L80 180L79 192L100 195L140 196V230H-10Z" fill="url(#forest)"/>
<path d="M-10 152L8 138L16 150L26 134L36 150L46 136L58 150L70 142L74 160L70 190L-10 190Z" fill="#a8c69a" opacity="0.5"/>
<path d="M-10 194Q40 184 80 192L130 196L140 230H-10Z" fill="#66994e"/>
<path d="M-10 211Q30 206 64 210L64 230H-10Z" fill="#8c7c70"/>
<!-- rock mass -->
<path d="M61 74L70 66L92 57L115 49L152 48L314 40V230H262L256 195L200 190L120 192L99 195L79 192L80 180L85 163L82 155L76 141L75 125L67 108L61 92Z" fill="url(#rock)"/>
<path d="M61 74L70 66L92 57L115 50Q112 90 132 128Q118 150 108 178L99 195L79 192L80 180L85 163L82 155L76 141L75 125L67 108L61 92Z" fill="#716a54" opacity="0.9"/>
<path d="M62 76L90 60L120 52L150 50L152 62Q110 66 90 80Q74 90 64 94Z" fill="#8a8a58" opacity="0.7"/><path d="M76 128Q96 124 122 150L108 178L99 195L79 192L80 180L85 163L82 155L76 141Z" fill="#5a5242" opacity="0.75"/>
<path d="M136 100Q150 82 190 80Q240 78 272 92Q280 120 274 140L262 178L252 198L228 198L224 170L220 146Q210 128 196 128L192 190H186L184 146Q176 132 160 130Q146 120 136 100Z" fill="#3a221e"/><ellipse cx="215" cy="104" rx="50" ry="18" fill="#241412"/><ellipse cx="246" cy="150" rx="16" ry="34" fill="#2c1a18"/>
<path d="M100 193L107 178L117 163L127 146L134 130L142 124L152 126L160 132L166 150L168 186L150 192Z" fill="url(#arch)"/>
<path d="M160 136Q176 138 184 148L188 190L166 192L158 176Z" fill="#aaa89e"/>
<path d="M197 182L197 150L202 132L210 126L218 132L224 148L226 160V182Z" fill="url(#arch)"/>
<path d="M200 162Q214 154 226 166L226 192L202 192Z" fill="#9c9a96"/>
<path d="M256 151Q272 146 288 156L288 208L262 208Q250 180 256 151Z" fill="#b4b2aa"/>
<path d="M272 104H314V156Q290 150 276 150Z" fill="#845446"/>
<path d="M120 190Q160 186 200 190L256 195L262 230H114Z" fill="#5a464a"/>
<path d="M252 198L262 196L314 200V230H254Z" fill="#6a6a48"/>
<!-- canopy -->
<path d="M82 -10H314V39L250 54L177 54L152 48L115 49L98 44Q86 30 82 18Z" fill="url(#canopy)"/><g opacity="0.8"><ellipse cx="130" cy="14" rx="16" ry="10" fill="#7e9e6c"/><ellipse cx="190" cy="30" rx="22" ry="10" fill="#82a070"/><ellipse cx="160" cy="6" rx="14" ry="6" fill="#3a5a3c"/><ellipse cx="220" cy="10" rx="18" ry="8" fill="#4a6a46"/><ellipse cx="105" cy="30" rx="10" ry="8" fill="#90b0a0"/></g>
<path d="M244 -10H314V40Q290 50 260 44Q250 30 244 -10Z" fill="#7a5a4e"/>
<path d="M177 41L314 36V82L270 86Q240 80 234 77L177 60Z" fill="#8a6a5e" opacity="0.9"/>
<path d="M152 56L234 56L234 78L152 78Z" fill="#6a3a30" opacity="0.8"/>
<path d="M110 36L122 36L126 52L112 52Z" fill="#7a6a5a"/>
<path d="M90 56Q120 46 150 48Q170 52 160 60Q120 58 96 66Z" fill="#7e8c48" opacity="0.7"/>
<path d="M170 20Q190 14 200 24Q186 30 172 28Z" fill="#7e8c48" opacity="0.7"/>
<g fill="#22241c"><path d="M4 -10H76Q66 4 48 8Q28 12 6 8Z"/><ellipse cx="19.9" cy="9.6" rx="3.3" ry="2.1" transform="rotate(143 19.9 9.6)"/><ellipse cx="73.9" cy="19.0" rx="2.7" ry="1.8" transform="rotate(67 73.9 19.0)"/><ellipse cx="55.2" cy="2.0" rx="2.7" ry="2.1" transform="rotate(8 55.2 2.0)"/><ellipse cx="89.8" cy="32.4" rx="3.6" ry="1.8" transform="rotate(59 89.8 32.4)"/><ellipse cx="47.8" cy="3.0" rx="3.0" ry="2.0" transform="rotate(147 47.8 3.0)"/><ellipse cx="16.5" cy="11.6" rx="3.5" ry="2.3" transform="rotate(87 16.5 11.6)"/><ellipse cx="21.7" cy="0.5" rx="2.7" ry="2.9" transform="rotate(38 21.7 0.5)"/><ellipse cx="87.4" cy="38.3" rx="4.0" ry="2.6" transform="rotate(131 87.4 38.3)"/><ellipse cx="16.3" cy="5.9" rx="2.7" ry="3.1" transform="rotate(160 16.3 5.9)"/><ellipse cx="40.4" cy="8.3" rx="3.1" ry="3.2" transform="rotate(70 40.4 8.3)"/><ellipse cx="8.3" cy="0.8" rx="4.5" ry="2.5" transform="rotate(88 8.3 0.8)"/><ellipse cx="57.1" cy="16.7" rx="2.6" ry="2.0" transform="rotate(63 57.1 16.7)"/><ellipse cx="83.9" cy="14.3" rx="2.9" ry="1.9" transform="rotate(12 83.9 14.3)"/><ellipse cx="74.4" cy="29.0" rx="3.8" ry="2.7" transform="rotate(162 74.4 29.0)"/><ellipse cx="86.5" cy="17.3" rx="4.4" ry="2.6" transform="rotate(159 86.5 17.3)"/><ellipse cx="73.6" cy="28.6" rx="4.1" ry="1.9" transform="rotate(46 73.6 28.6)"/><ellipse cx="30.3" cy="7.7" rx="2.4" ry="2.3" transform="rotate(162 30.3 7.7)"/><ellipse cx="88.6" cy="32.4" rx="2.8" ry="3.1" transform="rotate(95 88.6 32.4)"/><ellipse cx="76.4" cy="30.4" rx="3.6" ry="2.4" transform="rotate(105 76.4 30.4)"/><ellipse cx="77.3" cy="11.9" rx="2.8" ry="2.9" transform="rotate(2 77.3 11.9)"/><ellipse cx="55.9" cy="18.9" rx="3.5" ry="2.2" transform="rotate(73 55.9 18.9)"/><ellipse cx="14.0" cy="1.1" rx="3.2" ry="2.0" transform="rotate(156 14.0 1.1)"/><ellipse cx="61.0" cy="4.0" rx="2.9" ry="2.5" transform="rotate(40 61.0 4.0)"/><ellipse cx="20.0" cy="2.6" rx="3.8" ry="2.6" transform="rotate(8 20.0 2.6)"/><ellipse cx="65.7" cy="29.4" rx="4.0" ry="1.8" transform="rotate(83 65.7 29.4)"/><ellipse cx="11.3" cy="7.9" rx="3.8" ry="2.2" transform="rotate(125 11.3 7.9)"/><ellipse cx="32.3" cy="0.8" rx="2.9" ry="3.1" transform="rotate(53 32.3 0.8)"/><ellipse cx="48.3" cy="14.3" rx="2.4" ry="2.6" transform="rotate(91 48.3 14.3)"/><ellipse cx="64.8" cy="17.4" rx="2.3" ry="2.9" transform="rotate(176 64.8 17.4)"/><ellipse cx="35.8" cy="6.6" rx="2.4" ry="1.9" transform="rotate(13 35.8 6.6)"/><ellipse cx="74.4" cy="28.4" rx="3.6" ry="1.8" transform="rotate(116 74.4 28.4)"/><ellipse cx="43.2" cy="12.4" rx="3.1" ry="2.1" transform="rotate(9 43.2 12.4)"/><ellipse cx="42.4" cy="5.8" rx="4.1" ry="2.8" transform="rotate(82 42.4 5.8)"/><ellipse cx="25.9" cy="6.4" rx="3.7" ry="3.1" transform="rotate(15 25.9 6.4)"/><ellipse cx="46.3" cy="12.4" rx="4.2" ry="2.9" transform="rotate(113 46.3 12.4)"/><ellipse cx="69.7" cy="23.6" rx="3.8" ry="2.8" transform="rotate(44 69.7 23.6)"/><ellipse cx="83.0" cy="15.8" rx="4.1" ry="3.1" transform="rotate(178 83.0 15.8)"/><ellipse cx="6.5" cy="2.6" rx="3.1" ry="2.0" transform="rotate(100 6.5 2.6)"/><ellipse cx="12.7" cy="3.3" rx="3.9" ry="2.4" transform="rotate(19 12.7 3.3)"/><ellipse cx="34.2" cy="12.9" rx="2.8" ry="3.1" transform="rotate(58 34.2 12.9)"/><ellipse cx="27.4" cy="14.5" rx="3.8" ry="2.1" transform="rotate(108 27.4 14.5)"/><ellipse cx="29.3" cy="6.8" rx="3.3" ry="2.4" transform="rotate(111 29.3 6.8)"/><ellipse cx="29.6" cy="3.2" rx="2.8" ry="2.1" transform="rotate(173 29.6 3.2)"/><ellipse cx="8.9" cy="7.5" rx="3.8" ry="1.8" transform="rotate(90 8.9 7.5)"/><ellipse cx="9.3" cy="5.7" rx="2.8" ry="1.8" transform="rotate(98 9.3 5.7)"/><ellipse cx="13.9" cy="3.5" rx="4.3" ry="2.3" transform="rotate(24 13.9 3.5)"/><ellipse cx="72.5" cy="30.0" rx="2.3" ry="2.1" transform="rotate(73 72.5 30.0)"/><ellipse cx="52.4" cy="6.3" rx="4.1" ry="3.1" transform="rotate(159 52.4 6.3)"/><ellipse cx="7.5" cy="5.0" rx="4.3" ry="2.8" transform="rotate(137 7.5 5.0)"/><ellipse cx="21.8" cy="0.9" rx="3.6" ry="2.7" transform="rotate(85 21.8 0.9)"/><ellipse cx="35.7" cy="6.2" rx="4.2" ry="1.9" transform="rotate(12 35.7 6.2)"/><ellipse cx="28.7" cy="1.0" rx="3.3" ry="2.8" transform="rotate(118 28.7 1.0)"/><ellipse cx="19.3" cy="1.4" rx="3.4" ry="2.4" transform="rotate(124 19.3 1.4)"/><ellipse cx="35.6" cy="11.0" rx="2.6" ry="2.8" transform="rotate(89 35.6 11.0)"/><ellipse cx="19.6" cy="11.8" rx="4.3" ry="2.8" transform="rotate(39 19.6 11.8)"/><ellipse cx="71.3" cy="32.5" rx="4.3" ry="3.2" transform="rotate(70 71.3 32.5)"/><ellipse cx="85.1" cy="39.3" rx="2.2" ry="2.3" transform="rotate(110 85.1 39.3)"/><ellipse cx="57.0" cy="22.6" rx="2.6" ry="3.1" transform="rotate(97 57.0 22.6)"/></g><g fill="#a0a858" opacity="0.45"><ellipse cx="160" cy="12" rx="6" ry="4"/><ellipse cx="100" cy="52" rx="10" ry="3"/></g>
</g>
<path d="M201.9 55.4Q202.3 65.0 196.7 88.5 M171.8 64.8Q178.8 75.3 162.1 86.8 M282.1 53.2Q288.1 68.9 287.6 72.8 M240.1 61.7Q249.7 71.6 247.0 78.6 M210.4 39.0Q222.9 59.6 225.0 68.2 M265.7 67.5Q262.3 94.0 261.5 106.5 M287.8 41.1Q291.7 50.9 273.2 62.6 M254.0 47.6Q250.5 62.3 254.3 74.2 M248.3 66.9Q260.5 96.2 255.6 109.8 M260.0 43.2Q276.9 66.3 274.4 87.2 M265.7 44.8Q267.1 53.9 278.9 77.0 M284.4 69.7Q274.0 83.6 268.0 108.7 M209.4 62.6Q219.6 63.5 224.3 78.9 M266.3 48.6Q274.0 78.8 281.5 93.0 M211.5 40.5Q206.2 47.0 215.5 56.4 M251.8 43.0Q238.2 70.9 233.5 84.0 M290.2 50.1Q292.8 66.9 288.6 80.7 M244.9 57.8Q252.1 76.5 262.6 88.1 M201.8 47.6Q212.6 55.1 221.0 78.3 M225.6 56.6Q219.2 66.3 206.4 90.0 M254.1 52.9Q262.6 69.5 261.2 78.5 M173.0 39.9Q170.5 61.2 180.0 83.8 M249.4 48.2Q243.6 62.0 244.0 72.6 M210.3 50.1Q217.4 61.7 221.1 65.9 M211.5 45.1Q210.1 55.2 223.7 67.3 M263.5 41.3Q268.0 52.8 256.4 66.3" fill="none" stroke="#b89a88" stroke-width="1" opacity="0.35" filter="url(#bl05)"/><g opacity="0.3" filter="url(#bl05)"><circle cx="182.2" cy="152.6" r="0.9" fill="#8a8a7a"/><circle cx="183.0" cy="165.3" r="0.8" fill="#6a7a5a"/><circle cx="160.9" cy="188.1" r="0.9" fill="#8a8a7a"/><circle cx="182.5" cy="160.3" r="1.4" fill="#6a7a5a"/><circle cx="181.0" cy="160.5" r="0.7" fill="#d8d8d0"/><circle cx="173.5" cy="183.2" r="1.1" fill="#5a5048"/><circle cx="167.6" cy="170.6" r="0.6" fill="#5a5048"/><circle cx="164.1" cy="145.2" r="1.5" fill="#5a5048"/><circle cx="174.5" cy="189.4" r="1.3" fill="#6a7a5a"/><circle cx="179.4" cy="182.7" r="1.3" fill="#d8d8d0"/><circle cx="174.1" cy="185.0" r="1.5" fill="#d8d8d0"/><circle cx="163.1" cy="156.0" r="0.6" fill="#8a8a7a"/><circle cx="183.3" cy="185.5" r="1.2" fill="#6a7a5a"/><circle cx="172.5" cy="150.4" r="1.1" fill="#8a8a7a"/><circle cx="177.2" cy="168.6" r="1.0" fill="#6a7a5a"/><circle cx="168.9" cy="156.4" r="1.5" fill="#5a5048"/><circle cx="181.1" cy="147.8" r="0.8" fill="#6a7a5a"/><circle cx="173.9" cy="181.8" r="0.8" fill="#d8d8d0"/><circle cx="184.0" cy="181.3" r="1.4" fill="#6a7a5a"/><circle cx="172.7" cy="170.7" r="1.0" fill="#d8d8d0"/><circle cx="166.5" cy="172.8" r="1.1" fill="#6a7a5a"/><circle cx="172.3" cy="179.9" r="0.6" fill="#6a7a5a"/><circle cx="180.2" cy="147.1" r="0.6" fill="#5a5048"/><circle cx="185.3" cy="183.5" r="0.7" fill="#5a5048"/><circle cx="168.2" cy="159.2" r="1.0" fill="#5a5048"/><circle cx="175.3" cy="161.2" r="0.8" fill="#d8d8d0"/><circle cx="171.1" cy="150.7" r="0.6" fill="#5a5048"/><circle cx="180.7" cy="170.5" r="0.6" fill="#5a5048"/><circle cx="175.7" cy="180.2" r="1.0" fill="#6a7a5a"/><circle cx="176.2" cy="164.4" r="1.0" fill="#5a5048"/><circle cx="179.8" cy="159.2" r="1.6" fill="#5a5048"/><circle cx="172.0" cy="156.0" r="1.1" fill="#6a7a5a"/><circle cx="180.9" cy="155.1" r="0.7" fill="#6a7a5a"/><circle cx="184.3" cy="161.8" r="1.5" fill="#d8d8d0"/><circle cx="163.2" cy="176.1" r="1.5" fill="#5a5048"/><circle cx="177.4" cy="178.0" r="1.2" fill="#6a7a5a"/><circle cx="181.1" cy="177.2" r="1.1" fill="#8a8a7a"/><circle cx="180.1" cy="147.0" r="0.7" fill="#6a7a5a"/><circle cx="177.1" cy="161.9" r="1.4" fill="#d8d8d0"/><circle cx="181.9" cy="150.5" r="1.4" fill="#5a5048"/><circle cx="282.8" cy="205.3" r="1.2" fill="#6a7a5a"/><circle cx="257.2" cy="195.0" r="1.1" fill="#8a8a7a"/><circle cx="259.4" cy="193.9" r="1.5" fill="#6a7a5a"/><circle cx="273.6" cy="200.7" r="0.8" fill="#6a7a5a"/><circle cx="263.7" cy="162.1" r="0.8" fill="#5a5048"/><circle cx="264.1" cy="185.6" r="1.5" fill="#5a5048"/><circle cx="286.9" cy="173.0" r="0.8" fill="#5a5048"/><circle cx="283.0" cy="206.2" r="1.0" fill="#5a5048"/><circle cx="261.0" cy="174.5" r="1.5" fill="#8a8a7a"/><circle cx="259.1" cy="193.9" r="1.5" fill="#5a5048"/><circle cx="274.8" cy="200.1" r="0.7" fill="#8a8a7a"/><circle cx="260.7" cy="180.9" r="1.5" fill="#d8d8d0"/><circle cx="277.5" cy="199.9" r="1.2" fill="#d8d8d0"/><circle cx="284.5" cy="169.2" r="0.9" fill="#5a5048"/><circle cx="262.4" cy="183.9" r="0.8" fill="#5a5048"/><circle cx="280.8" cy="160.0" r="1.6" fill="#5a5048"/><circle cx="278.4" cy="163.5" r="1.2" fill="#6a7a5a"/><circle cx="271.4" cy="192.4" r="1.5" fill="#5a5048"/><circle cx="281.1" cy="201.4" r="0.6" fill="#8a8a7a"/><circle cx="284.5" cy="188.3" r="1.4" fill="#6a7a5a"/><circle cx="286.7" cy="199.8" r="0.8" fill="#8a8a7a"/><circle cx="280.8" cy="159.7" r="1.2" fill="#6a7a5a"/><circle cx="284.8" cy="166.3" r="1.5" fill="#d8d8d0"/><circle cx="261.9" cy="157.1" r="1.4" fill="#6a7a5a"/><circle cx="259.0" cy="198.7" r="0.9" fill="#d8d8d0"/><circle cx="270.5" cy="193.1" r="0.9" fill="#6a7a5a"/><circle cx="266.7" cy="176.4" r="1.1" fill="#8a8a7a"/><circle cx="276.6" cy="193.6" r="1.1" fill="#8a8a7a"/><circle cx="273.4" cy="158.7" r="0.9" fill="#5a5048"/><circle cx="259.6" cy="201.7" r="1.5" fill="#6a7a5a"/><circle cx="272.9" cy="191.2" r="1.3" fill="#d8d8d0"/><circle cx="280.2" cy="168.5" r="1.3" fill="#d8d8d0"/><circle cx="259.4" cy="204.9" r="0.9" fill="#6a7a5a"/><circle cx="277.3" cy="180.5" r="0.7" fill="#d8d8d0"/><circle cx="277.7" cy="183.7" r="0.8" fill="#8a8a7a"/><circle cx="261.7" cy="201.8" r="1.3" fill="#6a7a5a"/><circle cx="259.5" cy="183.3" r="1.5" fill="#5a5048"/><circle cx="273.8" cy="188.3" r="1.1" fill="#d8d8d0"/><circle cx="281.0" cy="191.5" r="0.7" fill="#8a8a7a"/><circle cx="280.1" cy="182.4" r="1.3" fill="#d8d8d0"/><circle cx="204.4" cy="170.1" r="0.7" fill="#8a8a7a"/><circle cx="203.0" cy="177.1" r="0.8" fill="#d8d8d0"/><circle cx="223.0" cy="190.4" r="1.0" fill="#6a7a5a"/><circle cx="210.5" cy="187.4" r="0.7" fill="#d8d8d0"/><circle cx="216.2" cy="182.4" r="1.2" fill="#6a7a5a"/><circle cx="206.4" cy="167.7" r="1.0" fill="#5a5048"/><circle cx="221.6" cy="184.5" r="1.2" fill="#8a8a7a"/><circle cx="222.6" cy="185.9" r="1.1" fill="#8a8a7a"/><circle cx="215.6" cy="168.1" r="0.9" fill="#d8d8d0"/><circle cx="202.7" cy="186.1" r="1.5" fill="#5a5048"/><circle cx="209.6" cy="189.2" r="0.9" fill="#5a5048"/><circle cx="225.4" cy="182.6" r="0.9" fill="#5a5048"/><circle cx="202.7" cy="167.7" r="1.2" fill="#6a7a5a"/><circle cx="220.5" cy="181.9" r="1.1" fill="#5a5048"/><circle cx="206.8" cy="185.5" r="0.8" fill="#5a5048"/><circle cx="204.7" cy="170.5" r="1.3" fill="#8a8a7a"/><circle cx="205.3" cy="185.8" r="1.2" fill="#6a7a5a"/><circle cx="202.6" cy="180.6" r="1.1" fill="#5a5048"/><circle cx="214.9" cy="189.9" r="0.9" fill="#d8d8d0"/><circle cx="218.7" cy="166.0" r="1.5" fill="#6a7a5a"/><circle cx="219.2" cy="184.2" r="0.9" fill="#8a8a7a"/><circle cx="224.4" cy="187.8" r="1.0" fill="#8a8a7a"/><circle cx="213.6" cy="165.3" r="0.6" fill="#6a7a5a"/><circle cx="222.3" cy="183.2" r="1.0" fill="#5a5048"/><circle cx="218.8" cy="178.1" r="1.0" fill="#5a5048"/><circle cx="209.3" cy="175.9" r="1.4" fill="#5a5048"/><circle cx="212.5" cy="175.7" r="0.6" fill="#d8d8d0"/><circle cx="210.8" cy="173.1" r="1.1" fill="#5a5048"/><circle cx="207.4" cy="162.1" r="0.8" fill="#d8d8d0"/><circle cx="205.4" cy="175.8" r="0.8" fill="#8a8a7a"/><circle cx="202.5" cy="179.5" r="1.1" fill="#6a7a5a"/><circle cx="205.3" cy="180.3" r="1.0" fill="#8a8a7a"/><circle cx="203.4" cy="162.7" r="1.0" fill="#5a5048"/><circle cx="202.8" cy="183.4" r="0.8" fill="#6a7a5a"/><circle cx="211.5" cy="162.8" r="1.6" fill="#8a8a7a"/><circle cx="207.8" cy="173.7" r="0.8" fill="#d8d8d0"/><circle cx="216.9" cy="172.4" r="0.7" fill="#6a7a5a"/><circle cx="221.4" cy="170.7" r="1.6" fill="#5a5048"/><circle cx="220.9" cy="190.8" r="1.1" fill="#d8d8d0"/><circle cx="202.7" cy="172.1" r="1.6" fill="#d8d8d0"/></g><g opacity="0.4" filter="url(#bl05)"><ellipse cx="84.3" cy="145.5" rx="2.9" ry="1.5" fill="#8a8a5a"/><ellipse cx="86.9" cy="145.3" rx="1.0" ry="1.4" fill="#4a3a30"/><ellipse cx="74.8" cy="141.6" rx="2.8" ry="1.0" fill="#4a3a30"/><ellipse cx="287.5" cy="75.8" rx="1.8" ry="1.4" fill="#7a7048"/><ellipse cx="283.0" cy="74.4" rx="2.5" ry="1.7" fill="#7a7048"/><ellipse cx="147.5" cy="75.7" rx="2.6" ry="1.3" fill="#4a3a30"/><ellipse cx="126.1" cy="73.8" rx="2.4" ry="1.5" fill="#4a3a30"/><ellipse cx="288.0" cy="56.0" rx="1.3" ry="1.7" fill="#4a3a30"/><ellipse cx="83.9" cy="146.9" rx="2.3" ry="1.2" fill="#7a7048"/><ellipse cx="150.1" cy="60.1" rx="1.8" ry="1.9" fill="#8a8a5a"/><ellipse cx="112.1" cy="146.3" rx="3.0" ry="1.9" fill="#5a4a3a"/><ellipse cx="201.4" cy="51.6" rx="1.5" ry="2.0" fill="#5a4a3a"/><ellipse cx="210.1" cy="55.8" rx="2.6" ry="1.5" fill="#8a8a5a"/><ellipse cx="109.4" cy="175.1" rx="1.2" ry="1.4" fill="#5a4a3a"/><ellipse cx="87.9" cy="118.0" rx="2.3" ry="1.6" fill="#4a3a30"/><ellipse cx="88.4" cy="167.0" rx="2.2" ry="1.8" fill="#5a4a3a"/><ellipse cx="143.3" cy="76.9" rx="2.5" ry="1.9" fill="#9a9068"/><ellipse cx="206.2" cy="80.0" rx="1.7" ry="2.0" fill="#9a9068"/><ellipse cx="118.2" cy="111.5" rx="1.5" ry="1.2" fill="#5a4a3a"/><ellipse cx="284.3" cy="75.8" rx="1.2" ry="1.7" fill="#9a9068"/><ellipse cx="181.8" cy="58.6" rx="1.9" ry="1.0" fill="#5a4a3a"/><ellipse cx="127.7" cy="110.5" rx="1.7" ry="1.7" fill="#9a9068"/><ellipse cx="96.0" cy="112.2" rx="2.8" ry="1.3" fill="#5a4a3a"/><ellipse cx="98.5" cy="156.8" rx="2.4" ry="2.0" fill="#9a9068"/><ellipse cx="69.0" cy="102.3" rx="1.7" ry="1.8" fill="#5a4a3a"/><ellipse cx="65.4" cy="138.1" rx="1.3" ry="0.8" fill="#8a8a5a"/><ellipse cx="62.5" cy="187.7" rx="2.6" ry="1.2" fill="#9a9068"/><ellipse cx="295.1" cy="54.9" rx="1.4" ry="0.8" fill="#4a3a30"/><ellipse cx="299.0" cy="73.2" rx="2.5" ry="1.5" fill="#5a4a3a"/><ellipse cx="142.3" cy="68.7" rx="1.0" ry="0.9" fill="#4a3a30"/><ellipse cx="102.6" cy="75.6" rx="2.4" ry="2.0" fill="#7a7048"/><ellipse cx="86.2" cy="158.4" rx="1.9" ry="1.1" fill="#9a9068"/><ellipse cx="99.0" cy="94.1" rx="2.0" ry="1.3" fill="#5a4a3a"/><ellipse cx="207.8" cy="54.3" rx="2.1" ry="1.5" fill="#4a3a30"/><ellipse cx="91.8" cy="160.0" rx="2.5" ry="1.1" fill="#4a3a30"/><ellipse cx="108.4" cy="178.9" rx="1.4" ry="1.3" fill="#4a3a30"/><ellipse cx="121.6" cy="187.2" rx="1.2" ry="1.1" fill="#5a4a3a"/><ellipse cx="89.4" cy="138.5" rx="1.2" ry="1.8" fill="#8a8a5a"/><ellipse cx="103.6" cy="118.1" rx="1.3" ry="1.0" fill="#5a4a3a"/><ellipse cx="156.6" cy="51.2" rx="1.8" ry="1.0" fill="#5a4a3a"/><ellipse cx="93.1" cy="70.5" rx="2.0" ry="1.0" fill="#5a4a3a"/><ellipse cx="153.0" cy="65.0" rx="1.8" ry="2.0" fill="#9a9068"/><ellipse cx="284.4" cy="51.0" rx="1.7" ry="1.0" fill="#4a3a30"/><ellipse cx="120.5" cy="99.6" rx="2.9" ry="1.4" fill="#9a9068"/><ellipse cx="97.5" cy="113.9" rx="1.8" ry="1.7" fill="#9a9068"/><ellipse cx="104.7" cy="184.9" rx="2.7" ry="1.0" fill="#9a9068"/><ellipse cx="261.9" cy="68.3" rx="2.2" ry="0.9" fill="#7a7048"/><ellipse cx="269.7" cy="66.0" rx="1.0" ry="1.8" fill="#4a3a30"/></g><rect width="304" height="220" filter="url(#tex)" opacity="0.28" style="mix-blend-mode:multiply"/>
</g></g>
</svg>
<div class="a" style="left:719px;top:154px;width:431px;height:520px;border:1px solid #5aa0e8;border-bottom:none"></div>
<div class="a" style="left:849px;top:284px;width:319px;height:229px;border:1px solid #3d86e0"></div>
<div class="a" style="left:1008px;top:258px;width:1px;height:26px;background:#3d86e0"></div>
<div class="a" style="left:844.2px;top:278.9px;width:10.6px;height:10.6px;border-radius:50%;background:radial-gradient(circle at 40% 35%,#4a8ae8,#2468cc);border:1.5px solid #f4f8ff;box-shadow:0 0 1.5px rgba(0,0,0,.3)"></div>
<div class="a" style="left:1003.2px;top:278.9px;width:10.6px;height:10.6px;border-radius:50%;background:radial-gradient(circle at 40% 35%,#4a8ae8,#2468cc);border:1.5px solid #f4f8ff;box-shadow:0 0 1.5px rgba(0,0,0,.3)"></div>
<div class="a" style="left:1162.2px;top:278.9px;width:10.6px;height:10.6px;border-radius:50%;background:radial-gradient(circle at 40% 35%,#4a8ae8,#2468cc);border:1.5px solid #f4f8ff;box-shadow:0 0 1.5px rgba(0,0,0,.3)"></div>
<div class="a" style="left:844.2px;top:392.9px;width:10.6px;height:10.6px;border-radius:50%;background:radial-gradient(circle at 40% 35%,#4a8ae8,#2468cc);border:1.5px solid #f4f8ff;box-shadow:0 0 1.5px rgba(0,0,0,.3)"></div>
<div class="a" style="left:1162.2px;top:392.9px;width:10.6px;height:10.6px;border-radius:50%;background:radial-gradient(circle at 40% 35%,#4a8ae8,#2468cc);border:1.5px solid #f4f8ff;box-shadow:0 0 1.5px rgba(0,0,0,.3)"></div>
<div class="a" style="left:844.2px;top:507.0px;width:10.6px;height:10.6px;border-radius:50%;background:radial-gradient(circle at 40% 35%,#4a8ae8,#2468cc);border:1.5px solid #f4f8ff;box-shadow:0 0 1.5px rgba(0,0,0,.3)"></div>
<div class="a" style="left:1003.2px;top:507.0px;width:10.6px;height:10.6px;border-radius:50%;background:radial-gradient(circle at 40% 35%,#4a8ae8,#2468cc);border:1.5px solid #f4f8ff;box-shadow:0 0 1.5px rgba(0,0,0,.3)"></div>
<div class="a" style="left:1162.2px;top:507.0px;width:10.6px;height:10.6px;border-radius:50%;background:radial-gradient(circle at 40% 35%,#4a8ae8,#2468cc);border:1.5px solid #f4f8ff;box-shadow:0 0 1.5px rgba(0,0,0,.3)"></div>
<div class="a" style="left:1003.3px;top:249.3px;width:10.5px;height:10.5px;border-radius:50%;background:#e8f0fc;border:2px solid #3d8ae8"></div>
<div class="a" style="left:213px;top:243px;width:374px;height:382px;background:#414141"></div>
<div class="a" style="left:213px;top:243px;width:374px;height:22px;background:#3b3b3b"></div>
<div class="a ui" style="left:213px;top:249.2px;width:374px;text-align:center;font-size:12px;color:#ececec">Retour à la ligne</div>
<svg class="a" style="left:572px;top:249px" width="10" height="10"><path d="M0.7 0.7L9.3 9.3M9.3 0.7L0.7 9.3" stroke="#f0f0f0" stroke-width="1.4"/></svg>
<div class="a" style="left:225px;top:281px;width:350px;height:107px;background:#3c3c3c;border:1px solid #383838"></div>
<div class="a" style="left:225px;top:393px;width:350px;height:108px;background:#3c3c3c;border:1px solid #383838"></div>
<div class="a" style="left:225px;top:505px;width:350px;height:81px;background:#3c3c3c;border:1px solid #383838"></div>
<div class="a ui" style="left:234.3px;top:293.19px;font-size:11px;color:#e8e8e8;">Style d'habillage</div>
<div class="a" style="left:237.0px;top:312.8px;width:46px;height:46px;background:#262626;border-radius:3px;box-shadow:0 -1px 0 0 #333"></div>
<div class="a ui" style="left:217px;top:367.79px;font-size:11px;color:#e8e8e8;width:86px;text-align:center">Aucun</div>
<svg class="a" style="left:237.0px;top:312.8px" width="46" height="46"><g stroke="#a4a4a4" stroke-width="1.7"><line x1="6" y1="6.50" x2="40.5" y2="6.50"/><line x1="6" y1="9.90" x2="40.5" y2="9.90"/><line x1="6" y1="13.30" x2="40.5" y2="13.30"/><line x1="6" y1="16.70" x2="40.5" y2="16.70"/><line x1="6" y1="20.10" x2="40.5" y2="20.10"/><line x1="6" y1="23.50" x2="40.5" y2="23.50"/><line x1="6" y1="26.90" x2="40.5" y2="26.90"/><line x1="6" y1="30.30" x2="40.5" y2="30.30"/><line x1="6" y1="33.70" x2="40.5" y2="33.70"/><line x1="6" y1="37.10" x2="40.5" y2="37.10"/></g><circle cx="23" cy="21.8" r="8.6" fill="none" stroke="#e4e4e4" stroke-width="1.6"/></svg>
<div class="a" style="left:293.0px;top:312.8px;width:46px;height:46px;background:#262626;border-radius:3px;box-shadow:0 -1px 0 0 #333"></div>
<div class="a ui" style="left:273px;top:367.79px;font-size:11px;color:#e8e8e8;width:86px;text-align:center">Saut</div>
<svg class="a" style="left:293.0px;top:312.8px" width="46" height="46"><g stroke="#a4a4a4" stroke-width="1.7"><line x1="6" y1="6.50" x2="40.5" y2="6.50"/><line x1="6" y1="9.90" x2="40.5" y2="9.90"/><line x1="6" y1="33.70" x2="40.5" y2="33.70"/><line x1="6" y1="37.10" x2="40.5" y2="37.10"/></g><circle cx="23" cy="21.8" r="8.8" fill="none" stroke="#e4e4e4" stroke-width="1.6"/></svg>
<div class="a" style="left:348.6px;top:312.8px;width:46px;height:46px;background:#262626;border-radius:3px;box-shadow:0 -1px 0 0 #333"></div>
<div class="a ui" style="left:328.6px;top:367.79px;font-size:11px;color:#e8e8e8;width:86px;text-align:center">Carré</div>
<svg class="a" style="left:348.6px;top:312.8px" width="46" height="46"><g stroke="#a4a4a4" stroke-width="1.7"><line x1="6" y1="6.50" x2="40.5" y2="6.50"/><line x1="6" y1="9.90" x2="40.5" y2="9.90"/><line x1="6" y1="13.30" x2="12" y2="13.30"/><line x1="34.5" y1="13.30" x2="40.5" y2="13.30"/><line x1="6" y1="16.70" x2="12" y2="16.70"/><line x1="34.5" y1="16.70" x2="40.5" y2="16.70"/><line x1="6" y1="20.10" x2="12" y2="20.10"/><line x1="34.5" y1="20.10" x2="40.5" y2="20.10"/><line x1="6" y1="23.50" x2="12" y2="23.50"/><line x1="34.5" y1="23.50" x2="40.5" y2="23.50"/><line x1="6" y1="26.90" x2="12" y2="26.90"/><line x1="34.5" y1="26.90" x2="40.5" y2="26.90"/><line x1="6" y1="30.30" x2="12" y2="30.30"/><line x1="34.5" y1="30.30" x2="40.5" y2="30.30"/><line x1="6" y1="33.70" x2="40.5" y2="33.70"/><line x1="6" y1="37.10" x2="40.5" y2="37.10"/></g><circle cx="23" cy="21.8" r="8" fill="none" stroke="#e4e4e4" stroke-width="1.6"/></svg>
<div class="a" style="left:404.5px;top:312.8px;width:46px;height:46px;background:#262626;border-radius:3px;border:1px solid #5b8bd0"></div>
<div class="a ui" style="left:384.5px;top:367.79px;font-size:11px;color:#e8e8e8;width:86px;text-align:center">Adapté</div>
<svg class="a" style="left:404.5px;top:312.8px" width="46" height="46"><g stroke="#a4a4a4" stroke-width="1.7"><line x1="6" y1="6.50" x2="40.5" y2="6.50"/><line x1="6" y1="9.90" x2="40.5" y2="9.90"/><line x1="6" y1="13.30" x2="16.34" y2="13.30"/><line x1="29.66" y1="13.30" x2="40.5" y2="13.30"/><line x1="6" y1="16.70" x2="13.32" y2="16.70"/><line x1="32.68" y1="16.70" x2="40.5" y2="16.70"/><line x1="6" y1="20.10" x2="12.14" y2="20.10"/><line x1="33.86" y1="20.10" x2="40.5" y2="20.10"/><line x1="6" y1="23.50" x2="12.14" y2="23.50"/><line x1="33.86" y1="23.50" x2="40.5" y2="23.50"/><line x1="6" y1="26.90" x2="13.32" y2="26.90"/><line x1="32.68" y1="26.90" x2="40.5" y2="26.90"/><line x1="6" y1="30.30" x2="16.34" y2="30.30"/><line x1="29.66" y1="30.30" x2="40.5" y2="30.30"/><line x1="6" y1="33.70" x2="40.5" y2="33.70"/><line x1="6" y1="37.10" x2="40.5" y2="37.10"/></g><circle cx="23" cy="21.8" r="9" fill="none" stroke="#e4e4e4" stroke-width="1.6"/></svg>
<div class="a" style="left:461.0px;top:312.8px;width:46px;height:46px;background:#262626;border-radius:3px;box-shadow:0 -1px 0 0 #333"></div>
<div class="a ui" style="left:441px;top:367.79px;font-size:11px;color:#e8e8e8;width:86px;text-align:center">Intérieur</div>
<svg class="a" style="left:461.0px;top:312.8px" width="46" height="46"><g stroke="#a4a4a4" stroke-width="1.7"><line x1="18.5" y1="16.9" x2="27.5" y2="16.9"/><line x1="16.7" y1="20.2" x2="29.3" y2="20.2"/><line x1="16.7" y1="23.5" x2="29.3" y2="23.5"/><line x1="18.5" y1="26.799999999999997" x2="27.5" y2="26.799999999999997"/></g><circle cx="23" cy="21.8" r="8.6" fill="none" stroke="#e4e4e4" stroke-width="1.6"/></svg>
<div class="a" style="left:516.9px;top:312.8px;width:46px;height:46px;background:#262626;border-radius:3px;box-shadow:0 -1px 0 0 #333"></div>
<div class="a ui" style="left:496.9px;top:367.79px;font-size:11px;color:#e8e8e8;width:86px;text-align:center">Bord</div>
<svg class="a" style="left:516.9px;top:312.8px" width="46" height="46"><g stroke="#a4a4a4" stroke-width="1.7"><line x1="6" y1="6.50" x2="40.5" y2="6.50"/><line x1="6" y1="9.90" x2="21.45" y2="9.90"/><line x1="24.55" y1="9.90" x2="40.5" y2="9.90"/><line x1="6" y1="13.30" x2="14.53" y2="13.30"/><line x1="31.47" y1="13.30" x2="40.5" y2="13.30"/><line x1="6" y1="16.70" x2="12.14" y2="16.70"/><line x1="33.86" y1="16.70" x2="40.5" y2="16.70"/><line x1="18.21" y1="16.70" x2="27.79" y2="16.70"/><line x1="6" y1="20.10" x2="11.12" y2="20.10"/><line x1="34.88" y1="20.10" x2="40.5" y2="20.10"/><line x1="16.21" y1="20.10" x2="29.79" y2="20.10"/><line x1="6" y1="23.50" x2="11.12" y2="23.50"/><line x1="34.88" y1="23.50" x2="40.5" y2="23.50"/><line x1="16.21" y1="23.50" x2="29.79" y2="23.50"/><line x1="6" y1="26.90" x2="12.14" y2="26.90"/><line x1="33.86" y1="26.90" x2="40.5" y2="26.90"/><line x1="18.21" y1="26.90" x2="27.79" y2="26.90"/><line x1="6" y1="30.30" x2="14.53" y2="30.30"/><line x1="31.47" y1="30.30" x2="40.5" y2="30.30"/><line x1="6" y1="33.70" x2="21.45" y2="33.70"/><line x1="24.55" y1="33.70" x2="40.5" y2="33.70"/><line x1="6" y1="37.10" x2="40.5" y2="37.10"/></g><circle cx="23" cy="21.8" r="11.2" fill="none" stroke="#e4e4e4" stroke-width="1.6"/><circle cx="23" cy="21.8" r="8.3" fill="none" stroke="#e4e4e4" stroke-width="1.6"/></svg>
<div class="a ui" style="left:234.4px;top:404.89px;font-size:11px;color:#e8e8e8;">Positionnement</div>
<div class="a" style="left:236.5px;top:424.8px;width:47px;height:47px;background:#262626;border-radius:3px;box-shadow:0 -1px 0 0 #333"></div>
<svg class="a" style="left:236.5px;top:424.8px" width="47" height="47"><g stroke="#a4a4a4" stroke-width="1.7"><line x1="6.3" y1="6.40" x2="41" y2="6.40"/><line x1="6.3" y1="9.80" x2="41" y2="9.80"/><line x1="6.3" y1="13.20" x2="41" y2="13.20"/><line x1="6.3" y1="16.60" x2="15.5" y2="16.60"/><line x1="31.5" y1="16.60" x2="41" y2="16.60"/><line x1="6.3" y1="20.00" x2="15.5" y2="20.00"/><line x1="31.5" y1="20.00" x2="41" y2="20.00"/><line x1="6.3" y1="23.40" x2="15.5" y2="23.40"/><line x1="31.5" y1="23.40" x2="41" y2="23.40"/><line x1="6.3" y1="26.80" x2="15.5" y2="26.80"/><line x1="31.5" y1="26.80" x2="41" y2="26.80"/><line x1="6.3" y1="30.20" x2="41" y2="30.20"/><line x1="6.3" y1="33.60" x2="41" y2="33.60"/><line x1="6.3" y1="37.00" x2="41" y2="37.00"/></g><rect x="18.8" y="17.2" width="9.6" height="9.6" fill="#e2e2e2"/></svg>
<div class="a" style="left:298.3px;top:424.8px;width:47px;height:47px;background:#262626;border-radius:3px;border:1px solid #5b8bd0"></div>
<svg class="a" style="left:298.3px;top:424.8px" width="47" height="47"><g stroke="#a4a4a4" stroke-width="1.7"><line x1="6.3" y1="6.40" x2="41" y2="6.40"/><line x1="6.3" y1="9.80" x2="41" y2="9.80"/><line x1="6.3" y1="13.20" x2="41" y2="13.20"/><line x1="24" y1="16.60" x2="41" y2="16.60"/><line x1="24" y1="20.00" x2="41" y2="20.00"/><line x1="24" y1="23.40" x2="41" y2="23.40"/><line x1="24" y1="26.80" x2="41" y2="26.80"/><line x1="6.3" y1="30.20" x2="41" y2="30.20"/><line x1="6.3" y1="33.60" x2="41" y2="33.60"/><line x1="6.3" y1="37.00" x2="41" y2="37.00"/></g><rect x="12.5" y="17.2" width="9.6" height="9.6" fill="#e2e2e2"/></svg>
<div class="a ui" style="left:234.4px;top:480.00px;font-size:10.75px;color:#e8e8e8;">Deux côtés Le plus large</div>
<div class="a ui" style="left:234.2px;top:517.19px;font-size:11px;color:#e8e8e8;">Distance du texte</div>
<div class="a ui" style="left:221.2px;top:538.79px;font-size:11px;color:#e8e8e8;width:80px;text-align:right">Gauche:</div>
<div class="a" style="left:305.3px;top:533.4px;width:75.0px;height:19.0px;background:#2d2d2d;border:1px solid #292929;border-radius:3px;box-shadow:0 1px 0 0 #474747"></div>
<div class="a ui" style="left:310.8px;top:538.79px;font-size:11px;color:#f0f0f0;">4 mm</div>
<div class="a" style="left:382.5px;top:533.9px;width:9.5px;height:18.0px;background:#313131;border:1px solid #282828;border-radius:4px;box-shadow:0 1px 0 0 #474747"></div>
<svg class="a" style="left:382.5px;top:533.9px" width="9.5" height="18.0"><path d="M1.5 7.5L4.75 4.3L8 7.5ZM1.5 10.8L4.75 14L8 10.8Z" fill="#e8e8e8"/></svg>
<div class="a ui" style="left:221.2px;top:562.69px;font-size:11px;color:#e8e8e8;width:80px;text-align:right">Haut:</div>
<div class="a" style="left:305.3px;top:557.5px;width:75.0px;height:18.899999999999977px;background:#2d2d2d;border:1px solid #292929;border-radius:3px;box-shadow:0 1px 0 0 #474747"></div>
<div class="a ui" style="left:310.8px;top:562.69px;font-size:11px;color:#f0f0f0;">4 mm</div>
<div class="a" style="left:382.5px;top:558.0px;width:9.5px;height:17.899999999999977px;background:#313131;border:1px solid #282828;border-radius:4px;box-shadow:0 1px 0 0 #474747"></div>
<svg class="a" style="left:382.5px;top:558.0px" width="9.5" height="17.899999999999977"><path d="M1.5 7.5L4.75 4.3L8 7.5ZM1.5 10.8L4.75 14L8 10.8Z" fill="#e8e8e8"/></svg>
<div class="a ui" style="left:380.5px;top:538.79px;font-size:11px;color:#e8e8e8;width:80px;text-align:right">Droite:</div>
<div class="a" style="left:465.6px;top:533.4px;width:74.9px;height:19.200000000000045px;background:#2d2d2d;border:1px solid #292929;border-radius:3px;box-shadow:0 1px 0 0 #474747"></div>
<div class="a ui" style="left:471.1px;top:538.79px;font-size:11px;color:#f0f0f0;">5 mm</div>
<div class="a" style="left:542.7px;top:533.9px;width:9.5px;height:18.200000000000045px;background:#313131;border:1px solid #282828;border-radius:4px;box-shadow:0 1px 0 0 #474747"></div>
<svg class="a" style="left:542.7px;top:533.9px" width="9.5" height="18.200000000000045"><path d="M1.5 7.5L4.75 4.3L8 7.5ZM1.5 10.8L4.75 14L8 10.8Z" fill="#e8e8e8"/></svg>
<div class="a ui" style="left:380.5px;top:562.69px;font-size:11px;color:#e8e8e8;width:80px;text-align:right">Bas:</div>
<div class="a" style="left:465.6px;top:557.6px;width:74.9px;height:19.0px;background:#2d2d2d;border:1px solid #292929;border-radius:3px;box-shadow:0 1px 0 0 #474747"></div>
<div class="a ui" style="left:471.1px;top:562.69px;font-size:11px;color:#f0f0f0;">4 mm</div>
<div class="a" style="left:542.7px;top:558.1px;width:9.5px;height:18.0px;background:#313131;border:1px solid #282828;border-radius:4px;box-shadow:0 1px 0 0 #474747"></div>
<svg class="a" style="left:542.7px;top:558.1px" width="9.5" height="18.0"><path d="M1.5 7.5L4.75 4.3L8 7.5ZM1.5 10.8L4.75 14L8 10.8Z" fill="#e8e8e8"/></svg>
<svg class="a" style="left:555px;top:548px" width="8" height="17"><g fill="none" stroke="#8c8c8c" stroke-width="1.1"><rect x="2.3" y="1.6" width="3.4" height="5.6" rx="1.7"/><rect x="2.3" y="8.6" width="3.4" height="5.6" rx="1.7"/><path d="M4 7.2V8.6"/></g></svg>
<div class="a" style="left:496.4px;top:590.8px;width:74px;height:18.4px;background:#3a3a3a;border-radius:3px;border:1px solid #2f2f2f;box-shadow:0 1px 0 0 #4a4a4a"></div>
<div class="a ui" style="left:496.4px;top:595.19px;font-size:11px;color:#ececec;width:74.4px;text-align:center">Fermer</div>
</body></html>
